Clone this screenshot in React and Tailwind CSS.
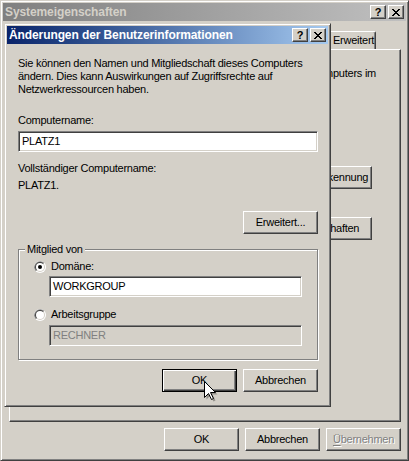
import React from "react";

// Win2k 3D edges
const raised =
  "border border-t-white border-l-white border-r-[#404040] border-b-[#404040] shadow-[inset_-1px_-1px_#808080]";
const sunken =
  "border border-t-[#808080] border-l-[#808080] border-r-white border-b-white shadow-[inset_1px_1px_#404040,inset_-1px_-1px_#d4d0c8]";
const frame =
  "border border-t-[#d4d0c8] border-l-[#d4d0c8] border-r-[#404040] border-b-[#404040] shadow-[inset_1px_1px_white,inset_-1px_-1px_#808080]";

const CloseGlyph = () => (
  <svg width="8" height="7" viewBox="0 0 8 7" shapeRendering="crispEdges">
    <path
      d="M0 0h2v1H0z M6 0h2v1H6z M1 1h2v1H1z M5 1h2v1H5z M2 2h4v1H2z M3 3h2v1H3z M2 4h4v1H2z M1 5h2v1H1z M5 5h2v1H5z M0 6h2v1H0z M6 6h2v1H6z"
      fill="black"
    />
  </svg>
);

const CaptionButton = ({ children }) => (
  <div className={`${raised} bg-[#d4d0c8] w-[16px] h-[14px] flex items-center justify-center`}>
    {children}
  </div>
);

const TitleBar = ({ title, active }) => (
  <div
    className={`h-[18px] flex items-center pl-[2px] pr-[2px] ${
      active
        ? "bg-gradient-to-r from-[#0a246a] to-[#a6caf0] text-white"
        : "bg-gradient-to-r from-[#808080] to-[#c0c0c0] text-[#d4d0c8]"
    }`}
  >
    <span className="flex-1 text-[12px] font-bold tracking-[-0.1px] leading-[18px] whitespace-nowrap">
      {title}
    </span>
    <div className="flex gap-[2px]">
      <CaptionButton>
        <span className="text-black text-[11px] font-bold leading-[12px] tracking-normal">?</span>
      </CaptionButton>
      <CaptionButton>
        <CloseGlyph />
      </CaptionButton>
    </div>
  </div>
);

const Btn = ({ children, isDefault, disabled, className = "" }) => (
  <button
    type="button"
    className={`${
      isDefault
        ? "border border-black shadow-[inset_1px_1px_white,inset_-1px_-1px_#404040,inset_-2px_-2px_#808080]"
        : raised
    } bg-[#d4d0c8] h-[23px] flex items-center justify-center leading-[13px] ${
      disabled ? "text-[#808080] [text-shadow:1px_1px_0_white]" : "text-black"
    } ${className}`}
  >
    {children}
  </button>
);

const Field = ({ value, disabled, className = "" }) => (
  <div
    className={`${sunken} h-[21px] flex items-center px-[3px] leading-[13px] ${
      disabled ? "bg-[#d4d0c8] text-[#808080]" : "bg-white text-black"
    } ${className}`}
  >
    {value}
  </div>
);

const Radio = ({ checked }) => (
  <svg width="12" height="12" viewBox="0 0 12 12" className="shrink-0">
    <circle cx="6" cy="6" r="6" fill="white" />
    <path d="M6 6 L10.24 1.76 A6 6 0 0 0 1.76 10.24 Z" fill="#808080" />
    <circle cx="6" cy="6" r="5" fill="#d4d0c8" />
    <path d="M6 6 L9.54 2.46 A5 5 0 0 0 2.46 9.54 Z" fill="#404040" />
    <circle cx="6" cy="6" r="4" fill="white" />
    {checked && <circle cx="6" cy="6" r="2" fill="black" />}
  </svg>
);

// tabs left of "Erweitert" sit under the dialog, so they carry no label here
const Tab = ({ children, active, className = "" }) => (
  <div
    className={`border-t border-l border-r border-t-white border-l-white border-r-[#404040] shadow-[inset_-1px_0_#808080] rounded-t-[2px] bg-[#d4d0c8] px-[3px] flex items-center overflow-hidden whitespace-nowrap leading-[13px] ${
      active ? "h-[21px] -mb-px" : "h-[18px]"
    } ${className}`}
  >
    {children}
  </div>
);

export default function App() {
  return (
    <div
      className={`${frame} relative w-[409px] h-[461px] bg-[#d4d0c8] p-[2px] flex flex-col font-['Liberation_Sans',Arial,sans-serif] text-[11px] tracking-[-0.25px] text-black select-none`}
    >
      {/* Systemeigenschaften (inactive) */}
      <TitleBar title="Systemeigenschaften" />

      <div className="relative z-10 mt-[8px] ml-[6px] mr-[5px] h-[20px] flex items-end">
        <Tab className="w-[58px]" />
        <Tab className="w-[118px]" active />
        <Tab className="w-[56px]" />
        <Tab className="w-[88px]" />
        <Tab className="w-[47px]">Erweitert</Tab>
      </div>

      <div className={`${raised} h-[373px] ml-[6px] mr-[5px] flex flex-col`}>
        <div className="self-end mr-[24px] mt-[17px] leading-[13px] whitespace-nowrap">
          dieses Computers im
        </div>
        <Btn className="self-end mr-[28px] mt-[86px] w-[92px]">Netzwerkkennung</Btn>
        <Btn className="self-end mr-[28px] mt-[28px] w-[92px]">Eigenschaften</Btn>
      </div>

      <div className="mt-[6px] mr-[5px] flex justify-end gap-[6px]">
        <Btn className="w-[75px]">OK</Btn>
        <Btn className="w-[75px]">Abbrechen</Btn>
        <Btn className="w-[75px]" disabled>
          <span className="underline underline-offset-[2px]">Ü</span>bernehmen
        </Btn>
      </div>

      {/* Änderungen der Benutzerinformationen (active dialog) */}
      <div className={`${frame} absolute z-20 left-[3px] top-[22px] w-[327px] h-[384px] bg-[#d4d0c8] p-[2px] flex flex-col`}>
        <TitleBar title="Änderungen der Benutzerinformationen" active />

        <div className="flex flex-col pl-[11px] pr-[10px]">
          <p className="mt-[13px] leading-[13px] whitespace-nowrap">
            Sie können den Namen und Mitgliedschaft dieses Computers
            <br />
            ändern. Dies kann Auswirkungen auf Zugriffsrechte auf
            <br />
            Netzwerkressourcen haben.
          </p>

          <div className="mt-[18px] leading-[13px]">Computername:</div>
          <Field value="PLATZ1" className="mt-[4px]" />

          <div className="mt-[10px] leading-[13px]">Vollständiger Computername:</div>
          <div className="mt-[4px] leading-[13px]">PLATZ1.</div>

          <Btn className="self-end mt-[19px] w-[75px]">Erweitert...</Btn>

          <fieldset className="mt-[9px] border border-[#808080] shadow-[inset_1px_1px_white,1px_1px_white]">
            <legend className="ml-[6px] px-[2px] leading-[13px] bg-[#d4d0c8]">Mitglied von</legend>
            <div className="flex flex-col pl-[15px] pr-[15px] pt-[4px] pb-[13px]">
              <div className="flex items-center gap-[5px] h-[13px] leading-[13px]">
                <Radio checked />
                <span>Domäne:</span>
              </div>
              <Field value="WORKGROUP" className="mt-[3px] ml-[15px]" />
              <div className="mt-[11px] flex items-center gap-[5px] h-[13px] leading-[13px]">
                <Radio />
                <span>Arbeitsgruppe</span>
              </div>
              <Field value="RECHNER" disabled className="mt-[4px] ml-[15px]" />
            </div>
          </fieldset>

          <div className="mt-[9px] flex justify-end gap-[6px]">
            <Btn className="w-[75px]" isDefault>OK</Btn>
            <Btn className="w-[75px]">Abbrechen</Btn>
          </div>
        </div>
      </div>

      {/* mouse pointer */}
      <svg width="16" height="22" viewBox="0 0 16 22" className="absolute z-30 left-[203px] top-[380px] pointer-events-none">
        <path d="M2.5 2.5 L2.5 18.5 L6.5 14.5 L9.5 20.5 L11.5 19.5 L8.5 13.5 L13.5 13.5 Z" fill="rgba(0,0,0,0.3)" />
        <path d="M0.5 0.5 L0.5 16.5 L4.5 12.5 L7.5 18.5 L9.5 17.5 L6.5 11.5 L11.5 11.5 Z" fill="white" stroke="black" strokeWidth="1" />
      </svg>
    </div>
  );
}
